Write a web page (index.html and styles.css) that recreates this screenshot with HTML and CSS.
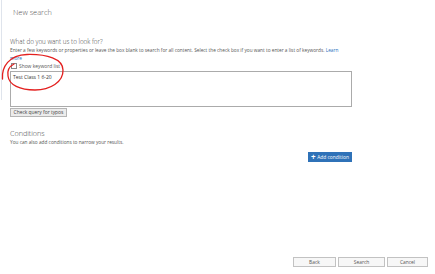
FILE: index.html
```
<!DOCTYPE html>
<html>
<head>
<meta charset="utf-8">
<link rel="stylesheet" href="styles.css">
</head>
<body>
<div class="page">
  <div class="rail"></div>
  <div class="main">
    <div class="title">New search</div>
    <div class="content">
      <div class="heading">What do you want us to look for?</div>
      <div class="desc">Enter a few keywords or properties or leave the box blank to search for all content. Select the check box if you want to enter a list of keywords. <span class="link">Learn<br>more</span></div>
      <label class="check-row"><span class="checkbox"></span><span>Show keyword list</span></label>
      <div class="textarea">Test Class 1 6-20</div>
      <div class="typo-row"><span class="btn typo">Check query for typos</span></div>
      <div class="heading cond">Conditions</div>
      <div class="desc">You can also add conditions to narrow your results.</div>
      <div class="add-row"><span class="add-btn"><span class="plus">+</span>Add condition</span></div>
    </div>
    <div class="footer">
      <span class="btn foot back">Back</span>
      <span class="btn foot search">Search</span>
      <span class="btn foot cancel">Cancel</span>
    </div>
  </div>
  <svg class="scribble" width="70" height="100" viewBox="0 0 70 100">
    <path d="M2.5,79 C1.5,67 9,55 27,54.5 C47,54 63,59 63,70 C63.5,82 50,90 35,90 C20,90 9,85 8,76 C7,70 10,66 14,64" fill="none" stroke="#e3201f" stroke-width="1.3" stroke-linecap="round"/>
  </svg>
</div>
</body>
</html>
```
FILE: styles.css
```
html, body {
  margin: 0;
  padding: 0;
  background: #ffffff;
}
body {
  font-family: "Open Sans", "Noto Sans", "Liberation Sans", sans-serif;
  color: #444444;
}
.page {
  position: relative;
  display: flex;
  height: 274px;
  width: 435px;
  overflow: hidden;
}
.rail {
  width: 1px;
  height: 100px;
  margin-left: 1px;
  background: #dfe4ec;
  flex: none;
}
.main {
  flex: 1;
  display: flex;
  flex-direction: column;
  padding: 0 7px 7px 8px;
}
.title {
  padding-top: 6px;
  margin-left: 3px;
  font-size: 7.4px;
  font-weight: 300;
  line-height: 12px;
  color: #555555;
}
.content {
  width: 342px;
  display: flex;
  flex-direction: column;
}
.heading {
  margin-top: 18.5px;
  font-size: 6.3px;
  font-weight: 300;
  line-height: 9px;
  color: #444444;
}
.desc {
  font-size: 4.75px;
  line-height: 8px;
  color: #555555;
  white-space: nowrap;
}
.link {
  color: #2a6fbd;
}
.check-row {
  display: flex;
  align-items: center;
  gap: 2px;
  height: 8px;
  font-size: 4.9px;
  color: #555555;
  padding-left: 1px;
}
.checkbox {
  width: 4px;
  height: 4px;
  border: 1px solid #8a8a8a;
  background: #ffffff;
}
.textarea {
  margin-top: 1px;
  height: 32px;
  border: 1px solid #ababab;
  padding: 1px 2px;
  font-size: 5px;
  line-height: 8px;
  color: #333333;
}
.typo-row {
  display: flex;
  margin-top: 1px;
}
.btn {
  display: flex;
  align-items: center;
  justify-content: center;
  box-sizing: border-box;
  border: 1px solid #b5b5b5;
  background: #f1f1f1;
  color: #444444;
  font-size: 4.9px;
}
.typo {
  width: 57px;
  height: 9px;
  background: #ececec;
}
.cond {
  margin-top: 11px;
  font-size: 7.2px;
  font-weight: 300;
  line-height: 10px;
}
.add-row {
  display: flex;
  justify-content: flex-end;
  margin-top: 6px;
}
.add-btn {
  display: flex;
  align-items: center;
  justify-content: center;
  gap: 1.5px;
  width: 44px;
  height: 10px;
  background: #2f72b8;
  color: #ffffff;
  font-size: 4.9px;
}
.plus {
  font-size: 8px;
  font-weight: 700;
  line-height: 8px;
}
.footer {
  margin-top: auto;
  display: flex;
  justify-content: flex-end;
  gap: 2px;
}
.foot {
  height: 10px;
  background: #f7f7f7;
  border-color: #c2c2c2;
  color: #555555;
}
.back { width: 43px; }
.search { width: 47px; }
.cancel { width: 41px; }
.scribble {
  position: absolute;
  left: 0;
  top: 0;
  pointer-events: none;
}
```
